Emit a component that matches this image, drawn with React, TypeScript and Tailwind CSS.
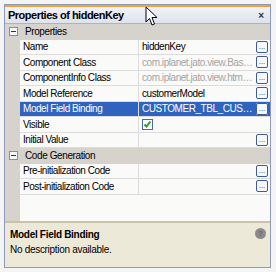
import React from "react";

const font = { fontFamily: '"Liberation Sans", Arial, sans-serif' };

function Ellipsis() {
  return (
    <div className="w-[12px] h-[12px] rounded-[2px] border border-[#3d5c98] bg-[#f6f8fb] flex items-end justify-center leading-none text-[8px] text-[#333] pb-[1px] shrink-0">
      ...
    </div>
  );
}

function Minus() {
  return (
    <div className="w-[9px] h-[9px] border border-[#7f8fae] bg-[#f4f6fa] flex items-center justify-center">
      <div className="w-[5px] h-[1px] bg-[#26345a]" />
    </div>
  );
}

function Header({ label }: { label: string }) {
  return (
    <div className="h-[15.5px] bg-[#d6d2cc] flex items-center">
      <div className="w-[15px] flex justify-center pl-[2px]">
        <Minus />
      </div>
      <span className="ml-[5px] text-[10px] tracking-[-0.4px] text-black">{label}</span>
    </div>
  );
}

function Row({
  name,
  value,
  gray,
  selected,
  button = true,
  check,
}: {
  name: string;
  value?: string;
  gray?: boolean;
  selected?: boolean;
  button?: boolean;
  check?: boolean;
}) {
  return (
    <div className="h-[15.5px] flex bg-[#d6d2cc]">
      <div className="w-[15px] shrink-0" />
      <div
        className={`flex-1 min-w-0 flex items-stretch border-b border-[#dcdcdc] text-[10px] tracking-[-0.45px] ${
          selected ? "bg-[#2f63c0] text-white" : "bg-[#fafaf8] text-black"
        }`}
      >
        <div className="w-[119px] shrink-0 pl-[3px] flex items-center border-r border-[#dcdcdc] whitespace-nowrap overflow-hidden">
          {name}
        </div>
        <div className="flex-1 min-w-0 flex items-center pl-[3px] pr-[2px]">
          <div
            className={`flex-1 min-w-0 whitespace-nowrap overflow-hidden text-ellipsis ${
              gray ? "text-[#a4a4a4]" : ""
            }`}
          >
            {check ? (
              <div className="w-[11px] h-[11px] border border-[#4a6a9a] bg-white flex items-center justify-center">
                <svg width="9" height="9" viewBox="0 0 9 9">
                  <path d="M1.5 4.5 L3.5 6.5 L7.5 1.5" stroke="#21a121" strokeWidth="2" fill="none" />
                </svg>
              </div>
            ) : (
              value
            )}
          </div>
          {button && (
            <div className="bg-[#fafaf8] ml-[2px] rounded-[2px] shrink-0 tracking-normal">
              <Ellipsis />
            </div>
          )}
        </div>
      </div>
    </div>
  );
}

export default function App() {
  return (
    <div className="w-[276px] h-[272px] bg-[#f4f4f4] relative" style={font}>
      <div className="absolute left-[4px] top-[4px] w-[267px] h-[264px] border border-[#8e9ab8] bg-white flex flex-col overflow-hidden">
        {/* Title bar */}
        <div className="h-[19px] shrink-0 border-t-2 border-[#eea43a] bg-gradient-to-b from-[#f1f3f8] to-[#dde2ec] border-b border-b-[#a9b3c9] flex items-center justify-between px-[3px]">
          <span className="text-[11px] font-bold text-black tracking-[-0.5px]">Properties of hiddenKey</span>
          <span className="text-[10px] font-bold text-[#333] mr-[3px]">×</span>
        </div>
        {/* Property sheet */}
        <div className="flex flex-col">
          <Header label="Properties" />
          <Row name="Name" value="hiddenKey" />
          <Row name="Component Class" value="com.iplanet.jato.view.BasicHiddenField" gray />
          <Row name="ComponentInfo Class" value="com.iplanet.jato.view.html.HiddenFieldComponentInfo" gray />
          <Row name="Model Reference" value="customerModel" />
          <Row name="Model Field Binding" value="CUSTOMER_TBL_CUSTOMER_ID" selected />
          <Row name="Visible" check button={false} />
          <Row name="Initial Value" value="" />
          <Header label="Code Generation" />
          <Row name="Pre-initialization Code" value="" />
          <Row name="Post-initialization Code" value="" />
        </div>
        <div className="flex-1 flex">
          <div className="w-[15px] bg-[#d6d2cc]" />
          <div className="flex-1 bg-[#fafaf8]" />
        </div>
        {/* Description */}
        <div className="h-[46px] shrink-0 border-t-2 border-[#c9c2a8] bg-[#ede9d8] flex justify-between pl-[5px] pr-[2px] pt-[4px]">
          <div className="flex flex-col text-[10px] tracking-[-0.3px]">
            <span className="font-bold text-black leading-[15px]">Model Field Binding</span>
            <span className="text-black leading-[15px]">No description available.</span>
          </div>
          <div className="w-[11px] h-[11px] rounded-full bg-[#8a8a8a] flex items-center justify-center text-[8px] font-bold text-[#6a6a6a] mr-[2px] mt-[1px]">
            ?
          </div>
        </div>
      </div>
      {/* Mouse cursor */}
      <svg className="absolute left-[145px] top-[6px]" width="14" height="22" viewBox="0 0 14 22">
        <path
          d="M1 1 L1 16 L4.5 12.5 L7 19 L9.5 18 L7 11.5 L12 11.5 Z"
          fill="white"
          stroke="black"
          strokeWidth="1"
          strokeLinejoin="miter"
        />
      </svg>
    </div>
  );
}
